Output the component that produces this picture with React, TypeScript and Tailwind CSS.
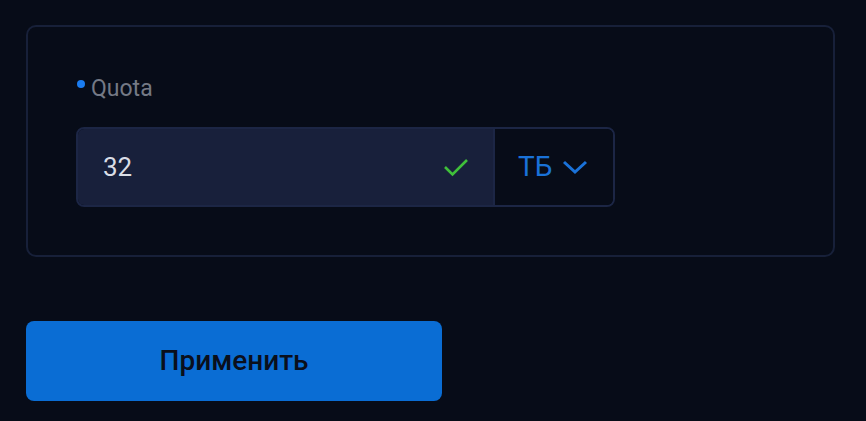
import { useState } from "react";

export default function App() {
    const [value, setValue] = useState("32");

    return (
        <div
            className="min-h-[421px] w-full bg-[#070c18] pt-[25px] pl-[26px] pr-[31px]"
            style={{ fontFamily: "Roboto, 'Noto Sans', sans-serif" }}
        >
            <div className="rounded-[10px] border-2 border-[#172039] px-[48px] pt-[49px] pb-[48px]">
                <div className="flex items-start">
                    <span className="mt-[4px] mr-[6px] ml-[1px] h-[8px] w-[8px] rounded-full bg-[#1a7cf0]" />
                    <span className="text-[23px] leading-[26px] text-[#747985]">Quota</span>
                </div>

                <div className="mt-[25px] flex h-[80px] w-[539px] overflow-hidden rounded-[8px] border-2 border-[#1c2645]">
                    <div className="flex flex-1 items-center bg-[#18203b] pl-[25px] pr-[24px]">
                        <input
                            value={value}
                            onChange={(e) => setValue(e.target.value)}
                            className="w-full bg-transparent text-[26px] text-[#d9dde6] outline-none"
                        />
                        <svg width="26" height="20" viewBox="0 0 26 20" fill="none" className="shrink-0">
                            <path d="M2 10 L9.5 17.5 L24 3" stroke="#3fbf3a" strokeWidth="2.6" />
                        </svg>
                    </div>
                    <div className="w-[2px] bg-[#1c2645]" />
                    <button className="flex w-[118px] items-center gap-[10px] bg-[#070c18] pl-[23px] text-[28px] text-[#1a72d8]">
                        <span>ТБ</span>
                        <svg width="26" height="16" viewBox="0 0 26 16" fill="none">
                            <path d="M2 3 L13 13 L24 3" stroke="#1a72d8" strokeWidth="3" />
                        </svg>
                    </button>
                </div>
            </div>

            <button className="mt-[64px] flex h-[80px] w-[416px] items-center justify-center rounded-[8px] bg-[#0a6dd4] text-[28px] font-medium text-[#0a0f1c]">
                Применить
            </button>
        </div>
    );
}
